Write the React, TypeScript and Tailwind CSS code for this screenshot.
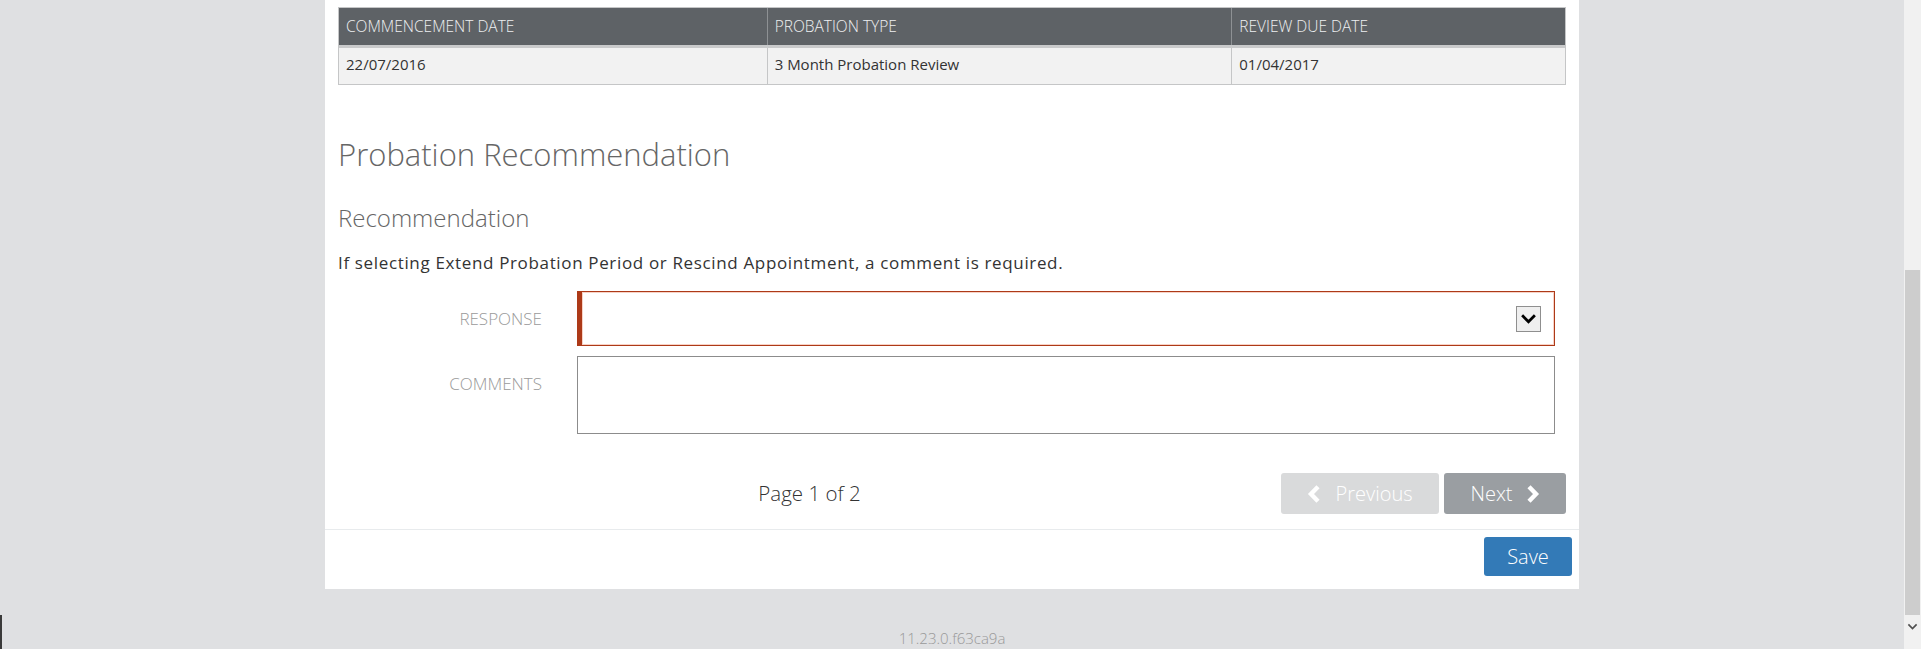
import React from "react";

const columns = [
  { label: "COMMENCEMENT DATE", value: "22/07/2016", width: "w-[428px]" },
  { label: "PROBATION TYPE", value: "3 Month Probation Review", width: "w-[465px]" },
  { label: "REVIEW DUE DATE", value: "01/04/2017", width: "w-[334px]" },
];

function Chevron({ dir, className, weight }: { dir: "left" | "right" | "down"; className?: string; weight?: number }) {
  const d =
    dir === "left"
      ? "M11 1.8 L4 9 L11 16.2"
      : dir === "right"
      ? "M4 1.8 L11 9 L4 16.2"
      : "M2 5 L8 11 L14 5";
  const box = dir === "down" ? "0 0 16 16" : "0 0 15 18";
  return (
    <svg viewBox={box} className={className} fill="none" stroke="currentColor" strokeWidth={weight ?? 4.4}>
      <path d={d} strokeLinejoin="miter" strokeLinecap="butt" />
    </svg>
  );
}

function SummaryTable() {
  return (
    <div className="border border-[#c5c6c7]">
      <div className="flex h-[37px] bg-[#5e6266] border-b-[3px] border-[#c9cacb] box-content">
        {columns.map((c, i) => (
          <div
            key={c.label}
            className={`${c.width} flex items-center pl-[7px] text-[15.5px] font-light text-[#eef0f1] ${i > 0 ? "border-l border-[#8e9194]" : ""}`}
          >
            {c.label}
          </div>
        ))}
      </div>
      <div className="flex h-[36px] bg-[#f2f2f2]">
        {columns.map((c, i) => (
          <div
            key={c.label}
            className={`${c.width} flex items-center pb-[3px] pl-[7px] text-[15px] text-[#333] ${i > 0 ? "border-l border-[#c5c6c7]" : ""}`}
          >
            {c.value}
          </div>
        ))}
      </div>
    </div>
  );
}

function RecommendationForm() {
  return (
    <div className="flex flex-col gap-[10px]">
      <div className="flex items-center">
        <div className="w-[204px] text-right text-[17px] font-light text-[#9a9a9a]">RESPONSE</div>
        <div className="ml-[35px] flex h-[55px] w-[978px] items-center justify-end border border-l-[5px] border-[#ad3a18] pr-[13px] shadow-[inset_0_0_0_1px_#f8d2c6]">
          <div className="flex h-[26px] w-[25px] items-center justify-center border border-[#8f8f8f] bg-[#efefef] text-black">
            <Chevron dir="down" weight={2.6} className="h-[17px] w-[17px]" />
          </div>
        </div>
      </div>
      <div className="flex items-start">
        <div className="flex h-[55px] w-[204px] items-center justify-end text-[17px] font-light text-[#9a9a9a]">
          COMMENTS
        </div>
        <textarea
          readOnly
          className="ml-[35px] h-[78px] w-[978px] resize-none border border-[#8c8c8c] bg-white outline-none"
        />
      </div>
    </div>
  );
}

export default function App() {
  return (
    <div className="relative flex h-[649px] w-full overflow-hidden bg-[#dfe0e2] font-['Open_Sans',sans-serif]">
      <div className="flex flex-1 flex-col items-center">
        <div className="w-[1254px] bg-white pt-[7px] pb-[13px]">
          <div className="px-[13px]">
            <SummaryTable />

            <h1 className="mt-[49px] text-[31px] font-light leading-[40px] text-[#666]">Probation Recommendation</h1>
            <h2 className="mt-[28px] text-[24px] font-light leading-[32px] text-[#666]">Recommendation</h2>
            <p className="mt-[17px] text-[17px] leading-[24px] tracking-[0.65px] text-[#333]">
              If selecting Extend Probation Period or Rescind Appointment, a comment is required.
            </p>

            <div className="mt-[16px]">
              <RecommendationForm />
            </div>

            <div className="mt-[39px] mb-[15px] flex items-center">
              <div className="flex-1 text-center text-[20.5px] font-light text-[#333]">Page 1 of 2</div>
              <button className="flex h-[41px] w-[158px] items-center justify-center gap-[13px] rounded-[3px] bg-[#d9dadb] text-[20px] font-light text-white">
                <Chevron dir="left" className="h-[18px] w-[15px]" />
                Previous
              </button>
              <button className="ml-[5px] flex h-[41px] w-[122px] items-center justify-center gap-[12px] rounded-[3px] bg-[#9a9ea2] text-[20px] font-light text-white">
                Next
                <Chevron dir="right" className="h-[18px] w-[15px]" />
              </button>
            </div>
          </div>

          <div className="h-px bg-[#e8ebed]" />

          <div className="mt-[7px] flex justify-end pr-[7px]">
            <button className="h-[39px] w-[88px] rounded-[3px] bg-[#337ab7] text-[20px] font-light text-white">Save</button>
          </div>
        </div>

        <div className="mt-[39px] text-[15px] font-light leading-[20px] text-[#999]">11.23.0.f63ca9a</div>
      </div>

      {/* fake window scrollbar */}
      <div className="flex w-[17px] flex-col bg-[#f1f1f1]">
        <div className="h-[270px]" />
        <div className="mx-[1px] h-[345px] bg-[#cdcdcd]" />
        <div className="flex h-[22px] items-center justify-center text-[#505050]">
          <Chevron dir="down" weight={2.4} className="h-[11px] w-[11px]" />
        </div>
      </div>

      <div className="absolute bottom-0 left-0 h-[34px] w-[2px] bg-[#3a3a3a]" />
    </div>
  );
}
